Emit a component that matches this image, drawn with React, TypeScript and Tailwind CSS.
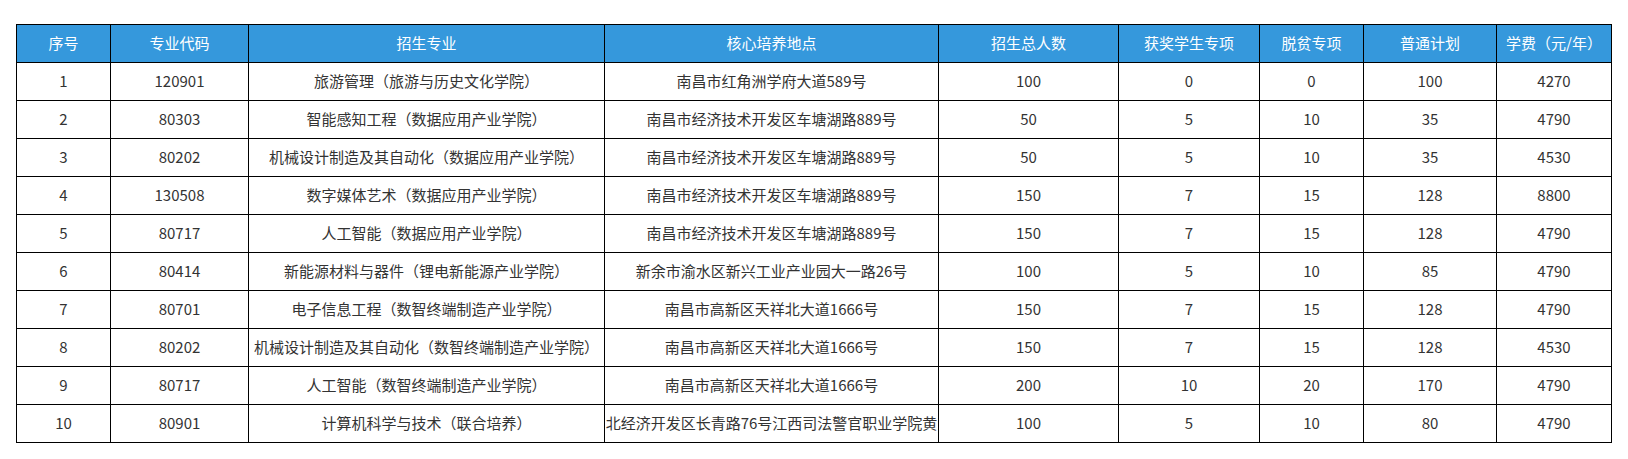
import React from "react";

interface Row {
  no: string;
  code: string;
  major: string;
  place: string;
  total: string;
  award: string;
  poor: string;
  normal: string;
  fee: string;
}

const headers = [
  "序号",
  "专业代码",
  "招生专业",
  "核心培养地点",
  "招生总人数",
  "获奖学生专项",
  "脱贫专项",
  "普通计划",
  "学费（元/年）",
];

const widths = [94, 138, 356, 334, 180, 141, 104, 133, 115];

const JK = "南昌市经济技术开发区车塘湖路889号";
const GX = "南昌市高新区天祥北大道1666号";

const rows: Row[] = [
  { no: "1", code: "120901", major: "旅游管理（旅游与历史文化学院）", place: "南昌市红角洲学府大道589号", total: "100", award: "0", poor: "0", normal: "100", fee: "4270" },
  { no: "2", code: "80303", major: "智能感知工程（数据应用产业学院）", place: JK, total: "50", award: "5", poor: "10", normal: "35", fee: "4790" },
  { no: "3", code: "80202", major: "机械设计制造及其自动化（数据应用产业学院）", place: JK, total: "50", award: "5", poor: "10", normal: "35", fee: "4530" },
  { no: "4", code: "130508", major: "数字媒体艺术（数据应用产业学院）", place: JK, total: "150", award: "7", poor: "15", normal: "128", fee: "8800" },
  { no: "5", code: "80717", major: "人工智能（数据应用产业学院）", place: JK, total: "150", award: "7", poor: "15", normal: "128", fee: "4790" },
  { no: "6", code: "80414", major: "新能源材料与器件（锂电新能源产业学院）", place: "新余市渝水区新兴工业产业园大一路26号", total: "100", award: "5", poor: "10", normal: "85", fee: "4790" },
  { no: "7", code: "80701", major: "电子信息工程（数智终端制造产业学院）", place: GX, total: "150", award: "7", poor: "15", normal: "128", fee: "4790" },
  { no: "8", code: "80202", major: "机械设计制造及其自动化（数智终端制造产业学院）", place: GX, total: "150", award: "7", poor: "15", normal: "128", fee: "4530" },
  { no: "9", code: "80717", major: "人工智能（数智终端制造产业学院）", place: GX, total: "200", award: "10", poor: "20", normal: "170", fee: "4790" },
  { no: "10", code: "80901", major: "计算机科学与技术（联合培养）", place: "昌北经济开发区长青路76号江西司法警官职业学院黄家", total: "100", award: "5", poor: "10", normal: "80", fee: "4790" },
];

const Cell: React.FC<{ text: string }> = ({ text }) => (
  <td className="border border-black p-0 h-[38px]">
    <div className="flex justify-center overflow-hidden whitespace-nowrap">{text}</div>
  </td>
);

const App: React.FC = () => {
  return (
    <div
      className="w-[1628px] h-[459px] bg-white pt-[24px]"
      style={{ fontFamily: '"Noto Sans CJK SC", "Noto Sans", sans-serif' }}
    >
      <table className="table-fixed border-collapse w-[1595px] mx-auto text-[15px] text-[#333]">
        <colgroup>
          {widths.map((w, i) => (
            <col key={i} style={{ width: w }} />
          ))}
        </colgroup>
        <thead>
          <tr className="bg-[#3598dc] text-white">
            {headers.map((h) => (
              <th key={h} className="border border-black p-0 h-[38px] font-normal">
                <div className="flex justify-center overflow-hidden whitespace-nowrap">{h}</div>
              </th>
            ))}
          </tr>
        </thead>
        <tbody>
          {rows.map((r) => (
            <tr key={r.no}>
              <Cell text={r.no} />
              <Cell text={r.code} />
              <Cell text={r.major} />
              <Cell text={r.place} />
              <Cell text={r.total} />
              <Cell text={r.award} />
              <Cell text={r.poor} />
              <Cell text={r.normal} />
              <Cell text={r.fee} />
            </tr>
          ))}
        </tbody>
      </table>
    </div>
  );
};

export default App;
